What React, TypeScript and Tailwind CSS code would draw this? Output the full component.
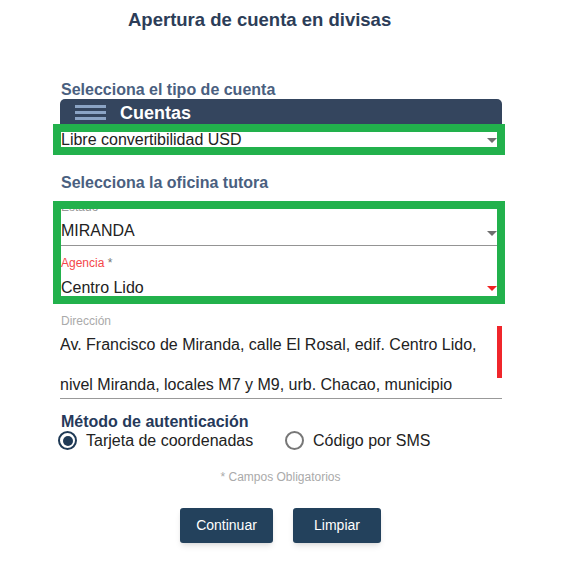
import React from "react"

const Radio = ({ checked }: { checked?: boolean }) =>
  checked ? (
    <span className="w-[19px] h-[19px] rounded-full border-2 border-[#1f3a56] flex items-center justify-center shrink-0">
      <span className="w-[10px] h-[10px] rounded-full bg-[#1f3a56]" />
    </span>
  ) : (
    <span className="w-[19px] h-[19px] rounded-full border-2 border-[#777777] shrink-0" />
  )

export default function App() {
  return (
    <div className="w-[561px] h-[575px] bg-white overflow-hidden font-['Liberation_Sans',Arial,sans-serif] text-[#222222]">
      <div className="h-[40px] flex items-center pl-[128px] text-[18.5px] font-bold text-[#2c3d58]">
        Apertura de cuenta en divisas
      </div>

      <div className="mt-[40px] h-[19px] pl-[61px] flex items-center text-[16px] font-bold text-[#4a5f80]">
        Selecciona el tipo de cuenta
      </div>

      <div className="ml-[60px] w-[442px] h-[25px] bg-[#34455e] rounded-t-[5px] flex items-start pl-[15px]">
        <div className="flex flex-col gap-[3px] pt-[6px]">
          <span className="block w-[31px] h-[3px] bg-[#8ba4c5]" />
          <span className="block w-[31px] h-[3px] bg-[#8ba4c5]" />
          <span className="block w-[31px] h-[3px] bg-[#8ba4c5]" />
        </div>
        <span className="ml-[14px] pt-[4px] text-[18px] leading-[20px] font-bold text-white">Cuentas</span>
      </div>

      <div className="ml-[53px] w-[452px] h-[31px] border-8 border-[#22b14c]">
        <div className="relative h-full bg-white flex items-center text-[16px] leading-[15px] overflow-hidden">
          Libre convertibilidad USD
          <span className="absolute right-0 top-[6px] w-0 h-0 border-l-[5px] border-r-[5px] border-t-[5px] border-l-transparent border-r-transparent border-t-[#6f6f6f]" />
        </div>
      </div>

      <div className="h-[46px] pt-[19px] pl-[61px] text-[16px] leading-[18px] font-bold text-[#4a5f80]">
        Selecciona la oficina tutora
      </div>

      <div className="ml-[53px] w-[452px] h-[103px] border-8 border-[#22b14c]">
        <div className="h-full bg-white overflow-hidden">
          <div className="mt-[-9px] h-[14px] text-[12px] leading-[14px] text-[#9a9a9a]">Estado</div>
          <div className="relative h-[32px] border-b border-[#949494] pt-[8px] text-[16px] leading-[18px]">
            MIRANDA
            <span className="absolute right-0 top-[17px] w-0 h-0 border-l-[5px] border-r-[5px] border-t-[5px] border-l-transparent border-r-transparent border-t-[#6f6f6f]" />
          </div>
          <div className="h-[24px] pt-[10px] text-[12px] leading-[14px]">
            <span className="text-[#f4474a]">Agencia</span>
            <span className="text-[#757575]"> *</span>
          </div>
          <div className="relative pt-[9px] text-[16px] leading-[18px]">
            Centro Lido
            <span className="absolute right-0 top-[16px] w-0 h-0 border-l-[5px] border-r-[5px] border-t-[5px] border-l-transparent border-r-transparent border-t-[#f02222]" />
          </div>
        </div>
      </div>

      <div className="h-[21px] pt-[10px] pl-[61px] text-[12px] leading-[14px] text-[#aaaaaa]">Dirección</div>

      <div className="relative ml-[60px] w-[442px] h-[74px] border-b border-[#999999] overflow-hidden text-[16px] leading-[40px]">
        <div className="w-[430px]">
          Av. Francisco de Miranda, calle El Rosal, edif. Centro Lido, nivel Miranda, locales M7 y M9, urb. Chacao, municipio
          Chacao, estado Miranda
        </div>
        <span className="absolute right-0 top-[1px] w-[5px] h-[52px] bg-[#f0262b]" />
      </div>

      <div className="mt-[14px] pl-[61px] text-[16px] leading-[18px] font-bold text-[#26395a]">Método de autenticación</div>

      <div className="h-[19px] pl-[58px] flex items-center text-[16px]">
        <div className="w-[227px] flex items-center">
          <Radio checked />
          <span className="ml-[9px]">Tarjeta de coordenadas</span>
        </div>
        <div className="flex items-center">
          <Radio />
          <span className="ml-[9px]">Código por SMS</span>
        </div>
      </div>

      <div className="mt-[20px] text-center text-[12px] leading-[14px] text-[#aaaaaa]">* Campos Obligatorios</div>

      <div className="mt-[24px] flex justify-center gap-[20px]">
        <button className="w-[93px] h-[35px] rounded-[3px] bg-[#23415c] text-white text-[14px] shadow-md">Continuar</button>
        <button className="w-[88px] h-[35px] rounded-[3px] bg-[#23415c] text-white text-[14px] shadow-md">Limpiar</button>
      </div>
    </div>
  )
}
